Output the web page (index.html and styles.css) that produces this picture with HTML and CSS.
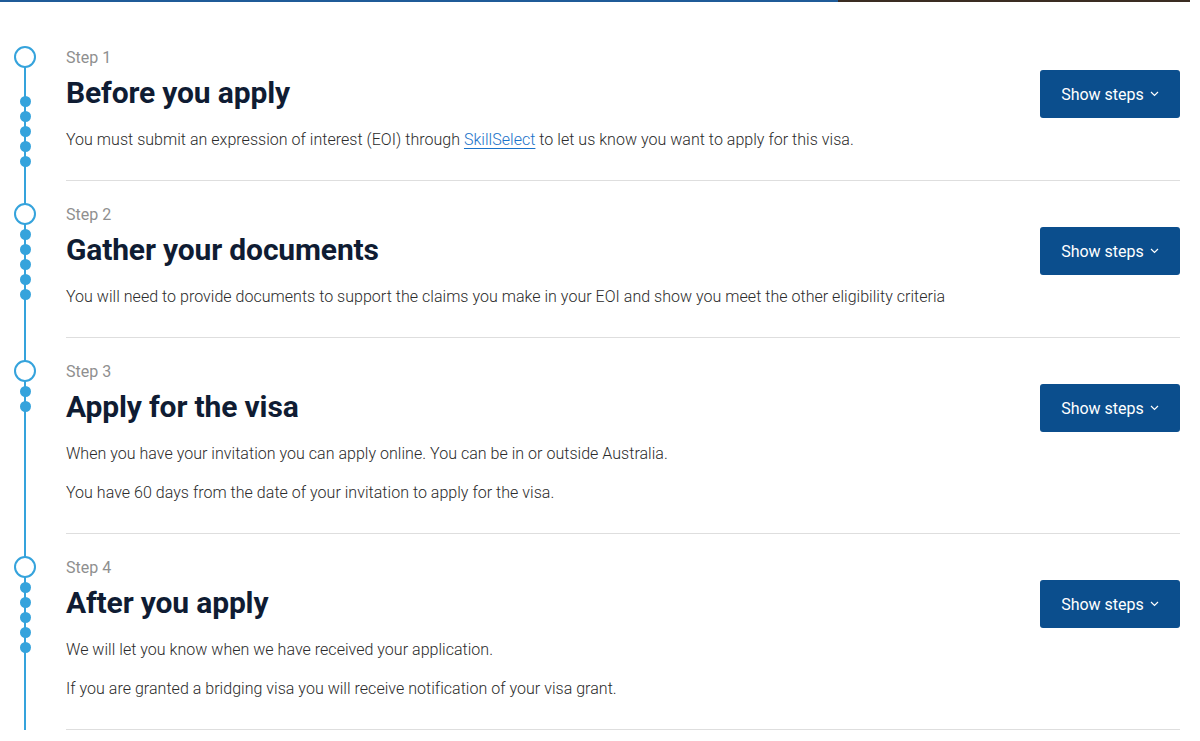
FILE: index.html
```html
<!DOCTYPE html>
<html lang="en">
<head>
<meta charset="utf-8">
<title>Steps</title>
<link rel="stylesheet" href="styles.css">
</head>
<body>
<div class="topbar"><div class="topbar-blue"></div><div class="topbar-dark"></div></div>
<main class="steps">
  <section class="step step-first">
    <div class="marker">
      <span class="ring"></span>
      <div class="dots dots-first"><span></span><span></span><span></span><span></span><span></span></div>
    </div>
    <div class="body">
      <p class="label">Step 1</p>
      <div class="head-row">
        <h2>Before you apply</h2>
        <button class="btn">Show steps <svg width="9" height="6" viewBox="0 0 9 6"><path d="M1 1l3.5 3.5L8 1" fill="none" stroke="#fff" stroke-width="1.2"/></svg></button>
      </div>
      <p class="text">You must submit an expression of interest (EOI) through <a href="#">SkillSelect</a> to let us know you want to apply for this visa.</p>
    </div>
  </section>
  <section class="step">
    <div class="marker">
      <span class="ring"></span>
      <div class="dots"><span></span><span></span><span></span><span></span><span></span></div>
    </div>
    <div class="body">
      <p class="label">Step 2</p>
      <div class="head-row">
        <h2>Gather your documents</h2>
        <button class="btn">Show steps <svg width="9" height="6" viewBox="0 0 9 6"><path d="M1 1l3.5 3.5L8 1" fill="none" stroke="#fff" stroke-width="1.2"/></svg></button>
      </div>
      <p class="text">You will need to provide documents to support the claims you make in your EOI and show you meet the other eligibility criteria</p>
    </div>
  </section>
  <section class="step">
    <div class="marker">
      <span class="ring"></span>
      <div class="dots"><span></span><span></span></div>
    </div>
    <div class="body">
      <p class="label">Step 3</p>
      <div class="head-row">
        <h2>Apply for the visa</h2>
        <button class="btn">Show steps <svg width="9" height="6" viewBox="0 0 9 6"><path d="M1 1l3.5 3.5L8 1" fill="none" stroke="#fff" stroke-width="1.2"/></svg></button>
      </div>
      <p class="text">When you have your invitation you can apply online. You can be in or outside Australia.</p>
      <p class="text">You have 60 days from the date of your invitation to apply for the visa.</p>
    </div>
  </section>
  <section class="step">
    <div class="marker">
      <span class="ring"></span>
      <div class="dots"><span></span><span></span><span></span><span></span><span></span></div>
    </div>
    <div class="body">
      <p class="label">Step 4</p>
      <div class="head-row">
        <h2>After you apply</h2>
        <button class="btn">Show steps <svg width="9" height="6" viewBox="0 0 9 6"><path d="M1 1l3.5 3.5L8 1" fill="none" stroke="#fff" stroke-width="1.2"/></svg></button>
      </div>
      <p class="text">We will let you know when we have received your application.</p>
      <p class="text">If you are granted a bridging visa you will receive notification of your visa grant.</p>
    </div>
  </section>
</main>
</body>
</html>
```
FILE: styles.css
```css
* { box-sizing: border-box; }
html, body { margin: 0; padding: 0; background: #fff; }
body { font-family: Roboto, "Liberation Sans", sans-serif; color: #333; overflow: hidden; height: 741px; }

.topbar { display: flex; height: 2px; }
.topbar-blue { width: 838px; background: #1f5b98; }
.topbar-dark { width: 352px; background: #3a2c22; }

.steps { padding-right: 20px; }

.step { display: grid; grid-template-columns: 48px 1fr; padding-left: 1px; }

.marker {
  display: flex; flex-direction: column; align-items: center;
  padding-top: 22px;
  background: linear-gradient(#35a3dc, #35a3dc) no-repeat center top / 2px 100%;
}
.step-first .marker {
  padding-top: 44px;
  background-position: center bottom;
  background-size: 2px calc(100% - 55px);
}
.ring {
  width: 22px; height: 22px; border-radius: 50%;
  border: 2px solid #35a3dc; background: #fff; flex: none;
}
.dots { display: flex; flex-direction: column; gap: 4px; margin-top: 4px; }
.dots-first { margin-top: 28px; }
.dots span { width: 11px; height: 11px; border-radius: 50%; background: #35a3dc; display: block; }

.body { padding-top: 22px; padding-bottom: 28px; border-bottom: 1px solid #dedede; margin-left: 17px; }
.step-first .body { padding-top: 44px; }

.label { margin: 0; font-size: 16px; line-height: 24px; color: #8f8f8f; }
.head-row { display: flex; justify-content: space-between; align-items: center; margin-top: 5px; }
h2 { margin: 0; font-size: 30px; line-height: 36px; font-weight: 700; color: #0f1c33; letter-spacing: -0.15px; }
.btn {
  width: 140px; height: 48px; background: #0b4e8d; color: #fff; border: 0; border-radius: 3px;
  font-family: inherit; font-size: 16px; display: flex; align-items: center; justify-content: center; gap: 6px;
  margin-top: -5px; margin-bottom: -7px; cursor: pointer;
}
.text { margin: 17px 0 0; font-size: 16px; line-height: 24px; font-weight: 300; color: #2b2b2b; letter-spacing: 0.03px; }
.text + .text { margin-top: 15px; }
a { color: #1a72c9; text-decoration: underline; text-underline-offset: 3px; text-decoration-thickness: 1px; }
```
